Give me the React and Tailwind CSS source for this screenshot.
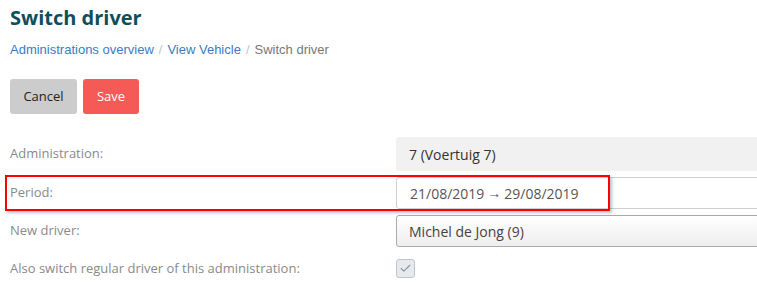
import { Check } from 'lucide-react';

const Row = ({ label, children }) => (
  <div className="flex items-center">
    <div className="w-[386px] shrink-0 text-[13px] text-[#8a8a8a]">{label}</div>
    <div className="w-[400px] shrink-0">{children}</div>
  </div>
);

export default function App() {
  return (
    <div className="relative w-[757px] h-[300px] overflow-hidden bg-white pl-[10px] pt-[3px] font-['Open_Sans',sans-serif]">
      {/* Header */}
      <h1 className="text-[20px] font-bold leading-[30px] text-[#0e4f5c]">Switch driver</h1>
      <div className="mt-[8px] flex items-center gap-[5px] font-['Liberation_Sans',Arial,sans-serif] text-[13px] leading-[18px]">
        <span className="text-[#3a7bc2]">Administrations overview</span>
        <span className="text-[#c4c4c4]">/</span>
        <span className="text-[#3a7bc2]">View Vehicle</span>
        <span className="text-[#c4c4c4]">/</span>
        <span className="text-[#777]">Switch driver</span>
      </div>

      {/* Actions */}
      <div className="mt-[20px] flex gap-[6px]">
        <button className="h-[35px] w-[67px] rounded-[3px] bg-[#cccccc] text-[13px] text-[#222]">Cancel</button>
        <button className="h-[35px] w-[56px] rounded-[3px] bg-[#f55a57] text-[13px] text-white">Save</button>
      </div>

      {/* Form */}
      <div className="mt-[23px] flex flex-col gap-[6px]">
        <Row label="Administration:">
          <div className="flex h-[34px] items-center rounded-[3px] bg-[#f1f1f1] px-[13px] text-[14px] text-[#333]">
            7 (Voertuig 7)
          </div>
        </Row>
        <Row label="Period:">
          <div className="flex h-[32px] items-center rounded-[3px] border border-[#d0d0d0] bg-white px-[13px] text-[14px] text-[#555]">
            21/08/2019 <span className="mx-[3px] font-['Liberation_Sans',sans-serif] text-[14px]">→</span> 29/08/2019
          </div>
        </Row>
        <Row label="New driver:">
          <div className="flex h-[32px] items-center rounded-[3px] border border-[#aaa] bg-gradient-to-b from-white to-[#eeeeee] px-[12px] text-[14px] text-[#444]">
            Michel de Jong (9)
          </div>
        </Row>
        <div className="flex items-center pt-[6px]">
          <div className="w-[386px] shrink-0 text-[13px] text-[#8a8a8a]">Also switch regular driver of this administration:</div>
          <div className="flex h-[19px] w-[19px] items-center justify-center rounded-[3px] border border-[#bfc4c9] bg-[#e6eaee]">
            <Check className="h-[13px] w-[13px] text-[#8a929a]" strokeWidth={2} />
          </div>
        </div>
      </div>

      {/* Highlight annotation */}
      <div className="absolute left-[5px] top-[175px] h-[36px] w-[605px] border-2 border-[#ff0000] shadow-[2px_2px_3px_rgba(0,0,0,0.25)]" />
    </div>
  );
}
